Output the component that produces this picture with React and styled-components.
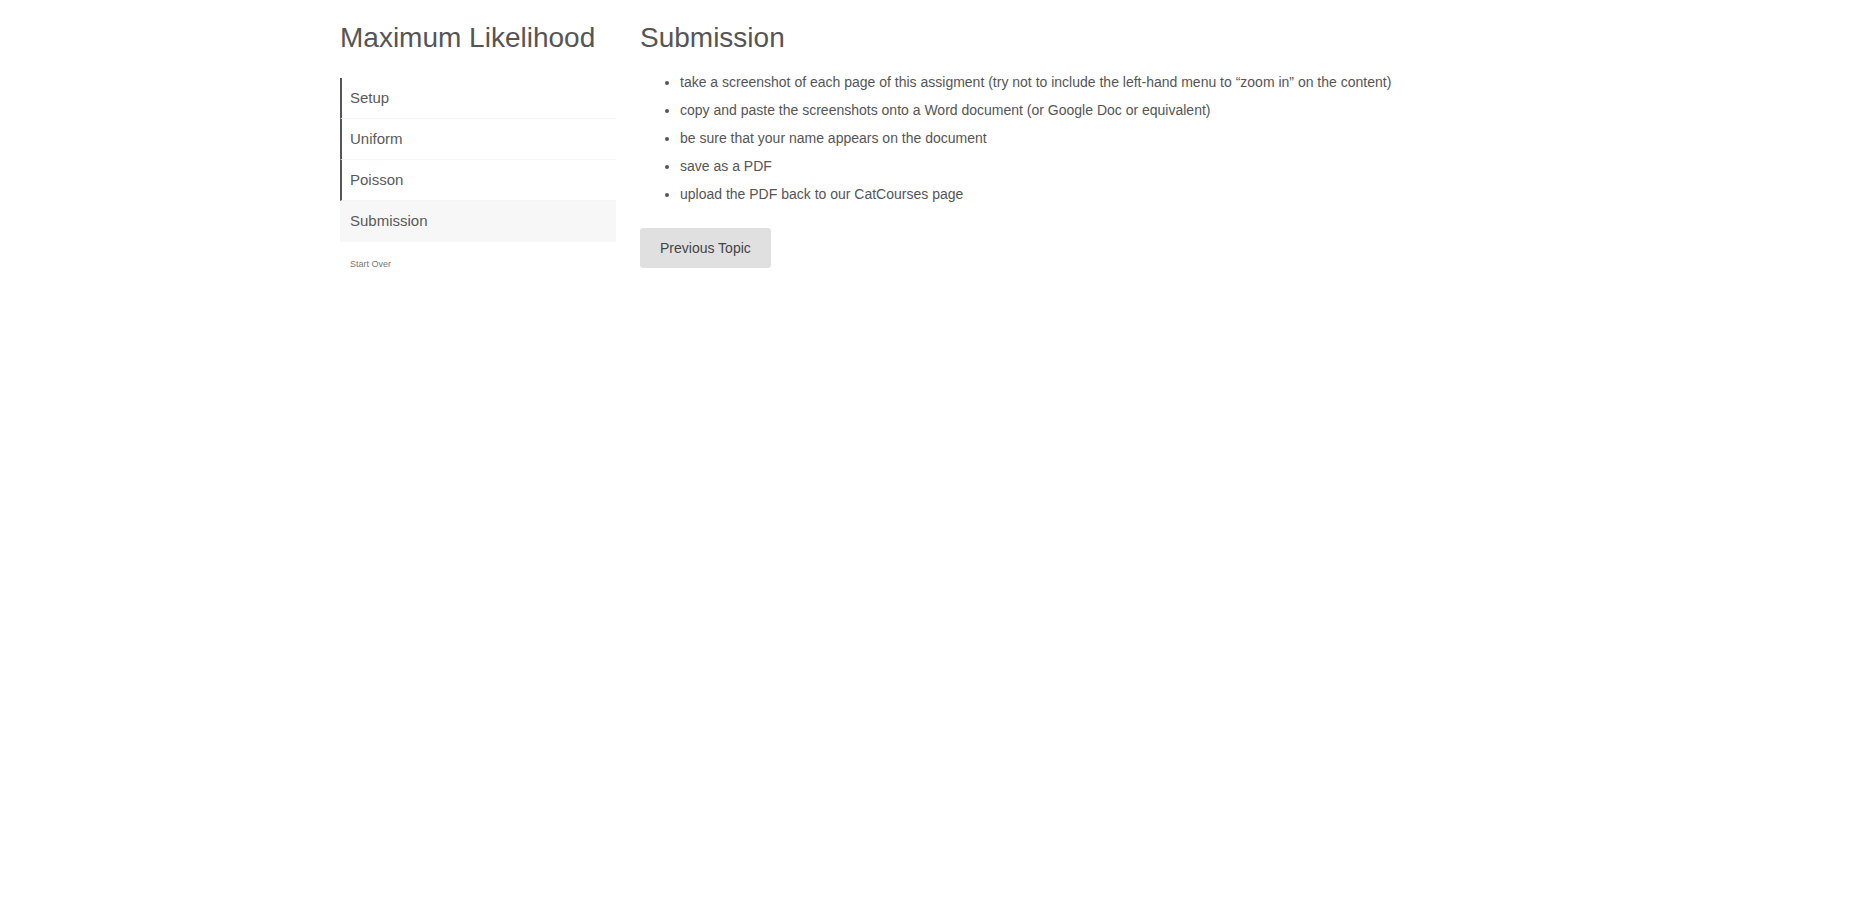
import React from 'react';
import styled, { createGlobalStyle } from 'styled-components';

const GlobalStyle = createGlobalStyle`
  html, body {
    margin: 0;
    padding: 0;
    background: #fff;
  }
  body {
    font-family: "Liberation Sans", Arial, sans-serif;
    font-size: 14px;
    line-height: 1.42857;
    color: #555;
  }
`;

const Page = styled.div`
  display: flex;
  align-items: flex-start;
  gap: 24px;
  padding: 0 0 0 340px;
`;

const Sidebar = styled.nav`
  width: 276px;
  flex-shrink: 0;
`;

const Title = styled.h2`
  margin: 23px 0 24px;
  font-size: 28px;
  font-weight: 400;
  line-height: 1.1;
  color: #555;
`;

const TopicList = styled.div`
  display: flex;
  flex-direction: column;
`;

const Topic = styled.div`
  padding: 10px 10px 10px ${(p) => (p.done ? '8px' : '10px')};
  font-size: 15px;
  line-height: 20px;
  color: #5a5a5a;
  border-left: ${(p) => (p.done ? '2px solid #555' : 'none')};
  border-bottom: 1px solid ${(p) => (p.active ? 'transparent' : '#f5f5f5')};
  background: ${(p) => (p.active ? '#f7f7f7' : 'transparent')};
  cursor: pointer;
`;

const StartOver = styled.div`
  margin-top: 16px;
  padding-left: 10px;
  font-size: 9px;
  line-height: 12px;
  color: #777;
  cursor: pointer;
`;

const Main = styled.main`
  flex: 1;
`;

const Heading = styled.h2`
  margin: 23px 0 18px;
  font-size: 28px;
  font-weight: 400;
  line-height: 1.1;
  color: #555;
`;

const Steps = styled.ul`
  margin: 0 0 24px;
  padding-left: 40px;
`;

const Step = styled.li`
  font-size: 14px;
  line-height: 20px;
  margin-bottom: 8px;
  color: #555;
`;

const Button = styled.button`
  padding: 10px 20px;
  font-family: "Liberation Sans", Arial, sans-serif;
  font-size: 14px;
  line-height: 20px;
  color: #444;
  background: #e0e0e0;
  border: none;
  border-radius: 3px;
  cursor: pointer;
`;

const topics = [
  { name: 'Setup', done: true },
  { name: 'Uniform', done: true },
  { name: 'Poisson', done: true },
  { name: 'Submission', active: true },
];

const steps = [
  'take a screenshot of each page of this assigment (try not to include the left-hand menu to \u201Czoom in\u201D on the content)',
  'copy and paste the screenshots onto a Word document (or Google Doc or equivalent)',
  'be sure that your name appears on the document',
  'save as a PDF',
  'upload the PDF back to our CatCourses page',
];

export default function App() {
  return (
    <>
      <GlobalStyle />
      <Page>
        <Sidebar>
          <Title>Maximum Likelihood</Title>
          <TopicList>
            {topics.map((t) => (
              <Topic key={t.name} done={t.done} active={t.active}>
                {t.name}
              </Topic>
            ))}
          </TopicList>
          <StartOver>Start Over</StartOver>
        </Sidebar>
        <Main>
          <Heading>Submission</Heading>
          <Steps>
            {steps.map((s) => (
              <Step key={s}>{s}</Step>
            ))}
          </Steps>
          <Button>Previous Topic</Button>
        </Main>
      </Page>
    </>
  );
}
